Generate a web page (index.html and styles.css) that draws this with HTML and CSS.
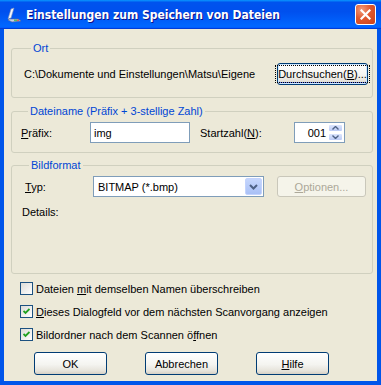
FILE: index.html
```html
<!DOCTYPE html>
<html lang="de">

<head>
    <meta charset="UTF-8">
    <link rel="stylesheet" href="styles.css">
    <title>Einstellungen zum Speichern von Dateien</title>
</head>

<body>
    <div class="window">
        <!-- Title bar -->
        <div class="titlebar">
            <svg class="app-icon" width="16" height="16" viewBox="0 0 16 16">
                <path d="M2 12 L5 2 L8 1 L5 11 Z" fill="#f4f6fb" stroke="#7d8fb8" stroke-width="0.6"/>
                <path d="M3 12 L12 12 L15 14 L6 15 L2 13 Z" fill="#c9d2e6" stroke="#5a6a93" stroke-width="0.6"/>
                <rect x="8" y="12.6" width="3" height="1.2" fill="#3bb54a"/>
                <rect x="11" y="12.6" width="2" height="1.2" fill="#e24b3c"/>
            </svg>
            <span class="title">Einstellungen zum Speichern von Dateien</span>
            <div class="close">
                <svg width="11" height="11" viewBox="0 0 11 11">
                    <path d="M1.5 1.5 L9.5 9.5 M9.5 1.5 L1.5 9.5" stroke="#fff" stroke-width="2.2" stroke-linecap="square"/>
                </svg>
            </div>
        </div>

        <div class="client">
            <!-- Ort -->
            <fieldset class="group group-ort">
                <legend>Ort</legend>
                <div class="ort-row">
                    <span class="path">C:\Dokumente und Einstellungen\Matsu\Eigene</span>
                    <button class="btn btn-browse"><span class="focus-rect">Durchsuchen(<u>B</u>)...</span></button>
                </div>
            </fieldset>

            <!-- Dateiname -->
            <fieldset class="group group-name">
                <legend>Dateiname (Präfix + 3-stellige Zahl)</legend>
                <div class="name-row">
                    <span class="lbl-prefix"><u>P</u>räfix:</span>
                    <div class="edit edit-prefix">img</div>
                    <span class="lbl-start">Startzahl(<u>N</u>):</span>
                    <div class="edit spin">
                        <span class="spin-value">001</span>
                        <div class="spin-buttons">
                            <div class="spin-btn">
                                <svg width="7" height="4" viewBox="0 0 7 4"><path d="M0.5 3.5 L3.5 0.5 L6.5 3.5" fill="none" stroke="#4d6185" stroke-width="1.4"/></svg>
                            </div>
                            <div class="spin-btn">
                                <svg width="7" height="4" viewBox="0 0 7 4"><path d="M0.5 0.5 L3.5 3.5 L6.5 0.5" fill="none" stroke="#4d6185" stroke-width="1.4"/></svg>
                            </div>
                        </div>
                    </div>
                </div>
            </fieldset>

            <!-- Bildformat -->
            <fieldset class="group group-format">
                <legend>Bildformat</legend>
                <div class="format-row">
                    <span class="lbl-type"><u>T</u>yp:</span>
                    <div class="edit combo">
                        <span class="combo-value">BITMAP (*.bmp)</span>
                        <div class="combo-btn">
                            <svg width="9" height="6" viewBox="0 0 9 6"><path d="M1 1 L4.5 4.5 L8 1" fill="none" stroke="#4d6185" stroke-width="2"/></svg>
                        </div>
                    </div>
                    <button class="btn btn-disabled"><u>O</u>ptionen...</button>
                </div>
                <div class="details">Details:</div>
            </fieldset>

            <!-- Checkboxes -->
            <div class="checks">
                <label class="check">
                    <span class="box"></span>
                    <span>Dateien <u>m</u>it demselben Namen überschreiben</span>
                </label>
                <label class="check">
                    <span class="box"><svg width="7" height="7" viewBox="0 0 7 7"><path d="M0.5 3 L2.5 5 L6.5 1" fill="none" stroke="#21a121" stroke-width="1.8"/></svg></span>
                    <span><u>D</u>ieses Dialogfeld vor dem nächsten Scanvorgang anzeigen</span>
                </label>
                <label class="check">
                    <span class="box"><svg width="7" height="7" viewBox="0 0 7 7"><path d="M0.5 3 L2.5 5 L6.5 1" fill="none" stroke="#21a121" stroke-width="1.8"/></svg></span>
                    <span>Bildordner nach dem Scannen ö<u>f</u>fnen</span>
                </label>
            </div>

            <!-- Buttons -->
            <div class="actions">
                <button class="btn btn-action">OK</button>
                <button class="btn btn-action">Abbrechen</button>
                <button class="btn btn-action"><u>H</u>ilfe</button>
            </div>
        </div>
    </div>
</body>
</html>
```

FILE: styles.css
```css
body {
    margin: 0;
    background-color: #ece9d8;
    font-family: "Liberation Sans", Arial, sans-serif;
    font-size: 11px;
}

.window {
    width: 381px;
    height: 385px;
    display: flex;
    flex-direction: column;
    background-color: #0055ea;
    box-sizing: border-box;
}

.titlebar {
    height: 29px;
    flex-shrink: 0;
    display: flex;
    align-items: center;
    background: linear-gradient(180deg, #0997ff, #0053ee 8%, #0050ee 40%, #0066ff 88%, #0066ff 93%, #005bff 95%, #003dd7 96%, #003dd7);
    padding: 0 5px 0 6px;
}

.app-icon {
    flex-shrink: 0;
    margin-right: 4px;
}

.title {
    flex: 1;
    color: white;
    font-family: "DejaVu Sans Condensed", "DejaVu Sans", sans-serif;
    font-weight: bold;
    font-size: 12px;
    text-shadow: 1px 1px #0f1089;
    white-space: nowrap;
}

.close {
    width: 21px;
    height: 21px;
    box-sizing: border-box;
    border: 1px solid white;
    border-radius: 3px;
    display: flex;
    align-items: center;
    justify-content: center;
    background: radial-gradient(circle at 30% 25%, #f19c7c, #e0582f 45%, #cc4119);
}

.client {
    flex: 1;
    margin: 0 4px 4px 4px;
    background-color: #ece9d8;
    padding: 13px 4px 0 7px;
}

/* Group boxes */
.group {
    margin: 0;
    padding: 0;
    min-width: 0;
    border: 1px solid #d0d0bf;
    border-radius: 3px;
}

.group legend {
    color: #0046d5;
    line-height: 13px;
    padding: 0 2px;
    margin-left: 7px;
}

.group-ort {
    padding: 8px 4px 12px 12px;
}

.ort-row {
    display: flex;
    justify-content: space-between;
    align-items: center;
}

.group-name {
    margin-top: 7px;
    padding: 4px 0 9px 9px;
}

.name-row {
    display: flex;
    align-items: center;
}

.lbl-prefix {
    width: 69px;
}

.edit {
    height: 21px;
    box-sizing: border-box;
    border: 1px solid #7f9db9;
    background-color: white;
    display: flex;
    align-items: center;
}

.edit-prefix {
    width: 100px;
    padding-left: 3px;
}

.lbl-start {
    margin-left: 10px;
    width: 94px;
}

.spin {
    width: 51px;
    padding: 1px;
}

.spin-value {
    flex: 1;
    text-align: right;
    padding-right: 2px;
}

.spin-buttons {
    display: flex;
    flex-direction: column;
    gap: 1px;
    width: 15px;
    height: 17px;
}

.spin-btn {
    flex: 1;
    display: flex;
    align-items: center;
    justify-content: center;
    background: linear-gradient(#dbe5fd, #bccbf6);
    border: 1px solid #fff;
    border-radius: 2px;
}

.group-format {
    margin-top: 6px;
    height: 115px;
    box-sizing: border-box;
    padding: 4px 0 0 10px;
}

.format-row {
    display: flex;
    align-items: center;
}

.lbl-type {
    width: 68px;
    padding-left: 3px;
}

.combo {
    width: 171px;
    padding: 1px;
}

.combo-value {
    flex: 1;
    padding-left: 3px;
}

.combo-btn {
    width: 17px;
    height: 17px;
    display: flex;
    align-items: center;
    justify-content: center;
    background: linear-gradient(#c5d6fc, #a9c0f6);
    border-radius: 2px;
    box-sizing: border-box;
    border: 1px solid #c3d3fd;
}

.details {
    margin-top: 9px;
}

/* Buttons */
.btn {
    font-family: "Liberation Sans", Arial, sans-serif;
    font-size: 11px;
    color: black;
    height: 22px;
    padding: 0;
    border: 1px solid #003c74;
    border-radius: 3px;
    background: linear-gradient(#ffffff, #f4f4f0 55%, #e6e3da 85%, #d6d0c5);
}

.btn-browse {
    width: 91px;
    box-shadow: inset 0 0 0 1px #cee7ff, inset 0 -1px 0 1px #6982ee;
    display: flex;
    align-items: center;
    justify-content: center;
}

.focus-rect {
    outline: 1px dotted black;
    padding: 2px 2px;
}

.btn-disabled {
    margin-left: 13px;
    width: 89px;
    height: 21px;
    color: #aca899;
    border-color: #c9c7ba;
    background: #f5f4ea;
}

.checks {
    display: flex;
    flex-direction: column;
    gap: 10px;
    margin-top: 8px;
    padding-left: 9px;
}

.check {
    display: flex;
    align-items: center;
    height: 13px;
}

.box {
    width: 13px;
    height: 13px;
    box-sizing: border-box;
    border: 1px solid #1c5180;
    background: linear-gradient(135deg, #dcdcd7, #ffffff);
    margin-right: 3px;
    display: flex;
    align-items: center;
    justify-content: center;
}

.actions {
    display: flex;
    gap: 38px;
    margin-top: 11px;
    padding-left: 23px;
}

.btn-action {
    width: 73px;
    height: 23px;
}
```
